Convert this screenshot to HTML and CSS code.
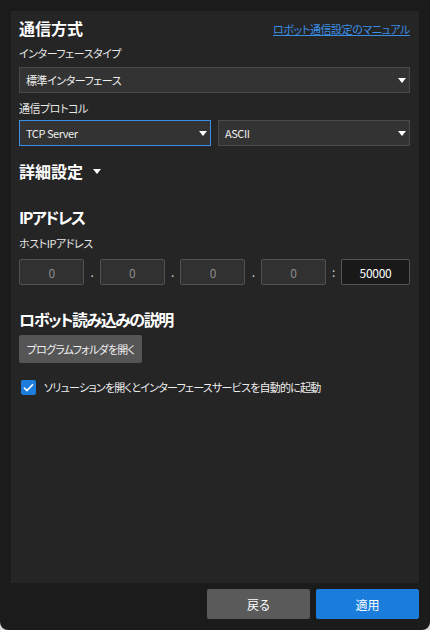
FILE: index.html
```html
<!DOCTYPE html>
<html lang="ja">
<head>
<meta charset="utf-8">
<link rel="stylesheet" href="styles.css">
</head>
<body>
<div class="window">
  <div class="panel">
    <div class="header">
      <h2 class="title">通信方式</h2>
      <a class="link" href="#">ロボット通信設定のマニュアル</a>
    </div>
    <div class="label l1">インターフェースタイプ</div>
    <div class="select full s1"><span>標準インターフェース</span><i class="arrow"></i></div>
    <div class="label l2">通信プロトコル</div>
    <div class="select-row">
      <div class="select focused"><span>TCP Server</span><i class="arrow"></i></div>
      <div class="select"><span>ASCII</span><i class="arrow"></i></div>
    </div>
    <h2 class="title detail">詳細設定 <i class="caret"></i></h2>
    <h2 class="title ip-title">IPアドレス</h2>
    <div class="label l3">ホストIPアドレス</div>
    <div class="ip-row">
      <div class="ipbox">0</div><span class="sep">.</span>
      <div class="ipbox">0</div><span class="sep">.</span>
      <div class="ipbox">0</div><span class="sep">.</span>
      <div class="ipbox">0</div><span class="sep colon">:</span>
      <div class="port">50000</div>
    </div>
    <h2 class="title robot-title">ロボット読み込みの説明</h2>
    <button class="folder-btn">プログラムフォルダを開く</button>
    <label class="check-row">
      <span class="checkbox"><svg width="11" height="9" viewBox="0 0 11 9"><path d="M1 4.6 L4 7.6 L10 1.2" fill="none" stroke="#fff" stroke-width="1.6"/></svg></span>
      <span>ソリューションを開くとインターフェースサービスを自動的に起動</span>
    </label>
  </div>
  <div class="footer">
    <button class="btn back">戻る</button>
    <button class="btn apply">適用</button>
  </div>
</div>
</body>
</html>
```
FILE: styles.css
```css
* { box-sizing: border-box; }
html, body { margin: 0; padding: 0; }
body {
  background: #d8d8d8;
  width: 430px;
  height: 630px;
  font-family: "Noto Sans CJK JP", "Noto Sans", sans-serif;
  font-feature-settings: "palt";
  color: #e6e6e6;
  font-size: 11px;
  letter-spacing: -0.45px;
}
.window {
  width: 430px;
  height: 630px;
  background: #1b1b1b;
  border-radius: 0 0 8px 8px;
  padding: 11px;
  display: flex;
  flex-direction: column;
}
.panel {
  flex: 1;
  background: #252525;
  padding: 7px 9px 0 8px;
  display: flex;
  flex-direction: column;
  align-items: stretch;
}
.header {
  display: flex;
  justify-content: space-between;
  align-items: center;
  height: 20px;
}
.title {
  margin: 0;
  font-size: 16px;
  line-height: 20px;
  font-weight: 700;
  color: #ffffff;
  letter-spacing: 0;
}
.link {
  color: #3a8ee6;
  font-size: 11px;
  line-height: 16px;
  text-decoration: underline;
  margin-top: 2px;
  letter-spacing: -0.4px;
}
.label {
  font-size: 11px;
  line-height: 16px;
  color: #e6e6e6;
}
.l1 { margin-top: 7px; }
.l2 { margin-top: 7px; }
.l3 { margin-top: 8px; }
.select {
  height: 26px;
  background: #333333;
  border: 1px solid #4a4a4a;
  display: flex;
  align-items: center;
  justify-content: space-between;
  padding: 0 3px 0 6px;
  font-size: 11px;
  color: #f0f0f0;
  flex: 1;
}
.s1 { margin-top: 6px; flex: none; }
.select.focused { border-color: #3d8ee8; }
.arrow {
  width: 0; height: 0;
  border-left: 4px solid transparent;
  border-right: 4px solid transparent;
  border-top: 5px solid #ffffff;
}
.select-row {
  display: flex;
  gap: 7px;
  margin-top: 4px;
}
.detail {
  margin-top: 15px;
  display: flex;
  align-items: center;
  gap: 10px;
}
.caret {
  width: 0; height: 0;
  border-left: 4.5px solid transparent;
  border-right: 4.5px solid transparent;
  border-top: 5px solid #ffffff;
  margin-top: 1px;
}
.ip-title { margin-top: 26px; letter-spacing: -1.6px; }
.ip-row {
  display: flex;
  align-items: center;
  margin-top: 8px;
  height: 26px;
}
.ipbox {
  flex: 1;
  height: 26px;
  background: #313131;
  border: 1px solid #505050;
  border-radius: 2px;
  display: flex;
  align-items: center;
  justify-content: center;
  color: #8c8c8c;
  font-size: 12px;
}
.sep {
  width: 15.5px;
  text-align: center;
  color: #d0d0d0;
  font-size: 12px;
  line-height: 16px;
}
.colon { width: 15px; }
.port {
  width: 69px;
  height: 26px;
  background: #191919;
  border: 1px solid #555555;
  border-radius: 2px;
  display: flex;
  align-items: center;
  justify-content: center;
  color: #ffffff;
  font-size: 12px;
  letter-spacing: -0.3px;
}
.robot-title { margin-top: 24px; letter-spacing: -1.5px; }
.folder-btn {
  align-self: flex-start;
  margin-top: 6px;
  height: 28px;
  width: 123px;
  background: #555555;
  border: none;
  border-radius: 2px;
  color: #eeeeee;
  font-family: inherit;
  font-feature-settings: "palt";
  font-size: 11px;
  letter-spacing: -0.75px;
  white-space: nowrap;
  padding: 0;
}
.check-row {
  display: flex;
  align-items: center;
  gap: 8px;
  margin-top: 16px;
  padding-left: 2px;
  font-size: 11px;
  line-height: 16px;
  color: #eeeeee;
  letter-spacing: -0.75px;
}
.checkbox {
  width: 15px;
  height: 15px;
  background: #1c7ddc;
  border-radius: 2px;
  display: flex;
  align-items: center;
  justify-content: center;
}
.footer {
  display: flex;
  justify-content: flex-end;
  gap: 6px;
  margin-top: 6px;
}
.btn {
  width: 103px;
  height: 30px;
  border: none;
  border-radius: 2px;
  color: #ffffff;
  font-family: inherit;
  font-size: 12px;
  letter-spacing: 0;
  font-feature-settings: "palt";
}
.back { background: #5a5a5a; }
.apply { background: #1a7ddc; }
```
